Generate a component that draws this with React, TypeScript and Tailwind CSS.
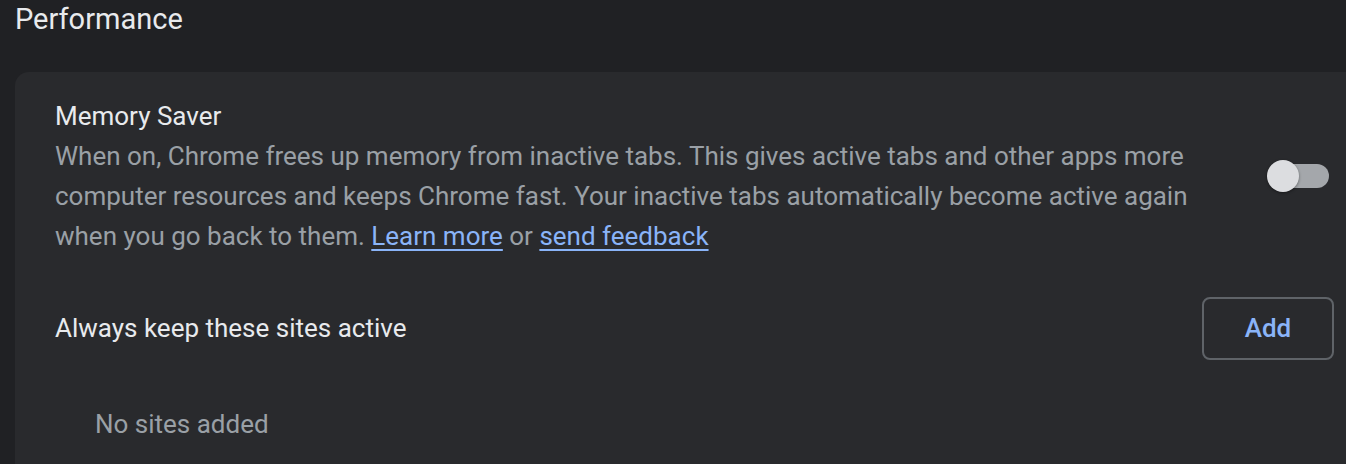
import React from 'react';

const Toggle: React.FC<{ on?: boolean }> = ({ on = false }) => (
  <div className="relative w-[62px] h-[32px] flex items-center shrink-0 mr-[5px]">
    <div className={`absolute right-0 left-[2px] h-[24px] rounded-full ${on ? 'bg-[#8ab4f8]' : 'bg-[#a4a7ab]'}`} />
    <div className="absolute left-0 w-[32px] h-[32px] rounded-full bg-[#dcdde0] shadow-[0_1px_3px_rgba(0,0,0,0.4)]" />
  </div>
);

export default function App() {
  return (
    <div
      className="w-[1346px] h-[464px] overflow-hidden bg-[#202124] text-[#e8eaed]"
      style={{ fontFamily: 'Roboto, "Liberation Sans", sans-serif' }}
    >
      <h2 className="pl-[15px] text-[29px] leading-[38px] font-normal text-[#e8eaed]">Performance</h2>

      <div className="mt-[34px] ml-[15px] w-[1359px] rounded-[14px] bg-[#292a2d] pl-[40px] pr-[40px] pt-[24px] pb-[40px]">
        <div className="flex items-center">
          <div className="w-[1150px]">
            <div className="text-[26px] leading-[40px]">Memory Saver</div>
            <p className="text-[26px] leading-[40px] text-[#9aa0a6]">
              When on, Chrome frees up memory from inactive tabs. This gives active tabs and other apps more computer
              resources and keeps Chrome fast. Your inactive tabs automatically become active again when you go back
              to them. <a className="text-[#8ab4f8] underline underline-offset-[4px] decoration-[2px]" href="#">Learn more</a> or <a className="text-[#8ab4f8] underline underline-offset-[4px] decoration-[2px]" href="#">send feedback</a>
            </p>
          </div>
          <div className="ml-auto">
            <Toggle />
          </div>
        </div>

        <div className="mt-[41px] flex items-center justify-between h-[62px]">
          <span className="text-[26px] leading-[40px]">Always keep these sites active</span>
          <button className="w-[132px] h-[63px] rounded-[8px] border-2 border-[#5f6368] text-[#8ab4f8] text-[26px] font-medium">
            Add
          </button>
        </div>

        <div className="mt-[45px] pl-[40px] text-[26px] leading-[40px] text-[#9aa0a6]">No sites added</div>
      </div>
    </div>
  );
}
